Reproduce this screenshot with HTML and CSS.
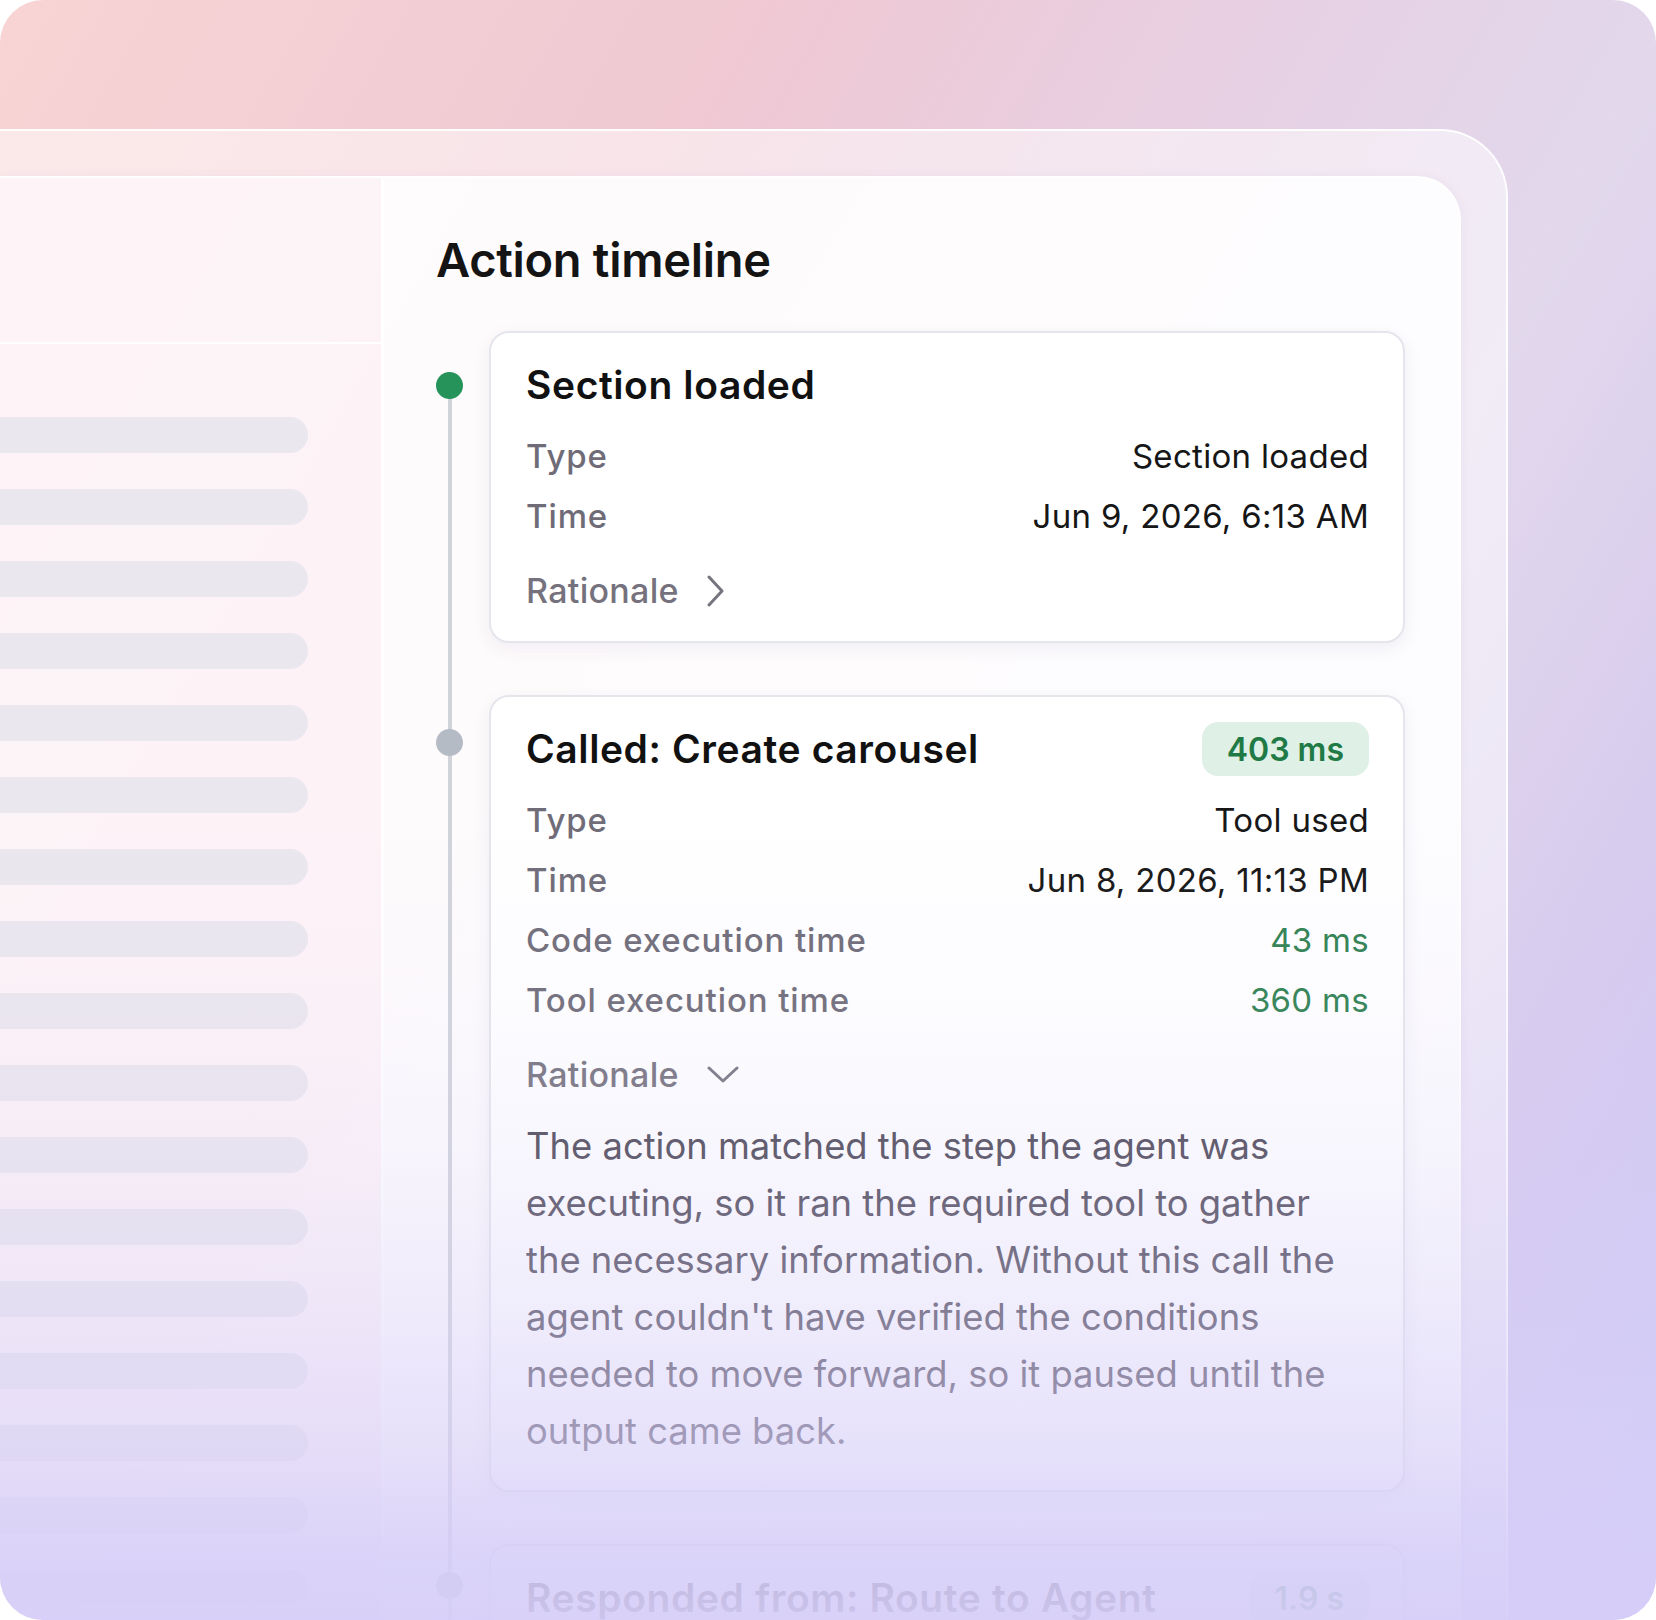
FILE: index.html
```html
<!DOCTYPE html>
<html lang="en">
<head>
    <meta charset="UTF-8">
    <meta name="viewport" content="width=device-width, initial-scale=1.0">
    <title>Action timeline</title>
    <link rel="stylesheet" href="styles.css">
</head>
<body>

    <div class="page">
        <div class="frame">
            <div class="panel">

                <!-- Left list (placeholder rows) -->
                <aside class="sidebar">
                    <div class="sidebar-head"></div>
                    <div class="skeleton">
                        <div class="bar"></div>
                        <div class="bar"></div>
                        <div class="bar"></div>
                        <div class="bar"></div>
                        <div class="bar"></div>
                        <div class="bar"></div>
                        <div class="bar"></div>
                        <div class="bar"></div>
                        <div class="bar"></div>
                        <div class="bar"></div>
                        <div class="bar"></div>
                        <div class="bar"></div>
                        <div class="bar"></div>
                        <div class="bar"></div>
                        <div class="bar"></div>
                        <div class="bar"></div>
                        <div class="bar"></div>
                    </div>
                </aside>

                <!-- Timeline -->
                <main class="content">
                    <h1>Action timeline</h1>

                    <div class="timeline">
                        <div class="item first">
                            <div class="rail"><span class="dot done"></span></div>
                            <div class="card">
                                <div class="card-head">
                                    <h2>Section loaded</h2>
                                </div>
                                <dl class="rows">
                                    <div class="row"><dt>Type</dt><dd>Section loaded</dd></div>
                                    <div class="row"><dt>Time</dt><dd>Jun 9, 2026, 6:13 AM</dd></div>
                                </dl>
                                <div class="rationale">
                                    Rationale
                                    <svg class="chev-right" width="18" height="32" viewBox="0 0 18 32"><polyline points="2,2 15,16 2,30" /></svg>
                                </div>
                            </div>
                        </div>

                        <div class="item">
                            <div class="rail"><span class="dot tool"></span></div>
                            <div class="card">
                                <div class="card-head">
                                    <h2>Called: Create carousel</h2>
                                    <span class="badge">403 ms</span>
                                </div>
                                <dl class="rows">
                                    <div class="row"><dt>Type</dt><dd>Tool used</dd></div>
                                    <div class="row"><dt>Time</dt><dd>Jun 8, 2026, 11:13 PM</dd></div>
                                    <div class="row"><dt>Code execution time</dt><dd class="ok">43 ms</dd></div>
                                    <div class="row"><dt>Tool execution time</dt><dd class="ok">360 ms</dd></div>
                                </dl>
                                <div class="rationale">
                                    Rationale
                                    <svg class="chev-down" width="32" height="18" viewBox="0 0 32 18"><polyline points="2,2 16,15 30,2" /></svg>
                                </div>
                                <p class="reason">The action matched the step the agent was<br>executing, so it ran the required tool to gather<br>the necessary information. Without this call the<br>agent couldn't have verified the conditions<br>needed to move forward, so it paused until the<br>output came back.</p>
                            </div>
                        </div>

                        <div class="item">
                            <div class="rail"><span class="dot reply"></span></div>
                            <div class="card">
                                <div class="card-head">
                                    <h2>Responded from: Route to Agent</h2>
                                    <span class="badge">1.9 s</span>
                                </div>
                                <dl class="rows">
                                    <div class="row"><dt>Type</dt><dd>Response</dd></div>
                                </dl>
                            </div>
                        </div>
                    </div>
                </main>
            </div>
        </div>

        <!-- bottom fade -->
        <div class="fade"></div>
    </div>

</body>
</html>
```

FILE: styles.css
```css
* {
    box-sizing: border-box;
}

html, body {
    margin: 0;
    background: #fff;
}

body {
    font-family: Inter, "Noto Sans", sans-serif;
}

/* Outer card with the pink / lilac wash */
.page {
    position: relative;
    width: 1656px;
    height: 1620px;
    border-radius: 43px;
    overflow: hidden;
    padding-top: 129px;
    display: flex;
    flex-direction: column;
    background: linear-gradient(120deg, #f8d4d4 0%, #efc8d3 30%, #e6d1e5 52%, #e2d8ec 66%, #d6caee 84%, #ccc9f8 100%);
}

/* Glass frame */
.frame {
    flex: 1;
    width: 1508px;
    display: flex;
    flex-direction: column;
    padding: 45px 45px 0 0;
    border-top: 2px solid rgba(255, 255, 255, 0.95);
    border-right: 2px solid rgba(255, 255, 255, 0.85);
    border-top-right-radius: 68px;
    background: rgba(255, 255, 255, 0.5);
}

.panel {
    flex: 1;
    display: grid;
    grid-template-columns: 384px 1fr;
    border-top: 2px solid #fff;
    border-right: 2px solid rgba(255, 255, 255, 0.9);
    border-top-right-radius: 44px;
    background: rgba(255, 255, 255, 0.85);
    box-shadow: 0 0 10px rgba(190, 170, 210, 0.15);
    overflow: hidden;
}

/* Sidebar */
.sidebar {
    border-right: 3px solid #fff;
    background: rgba(252, 228, 238, 0.35);
}

.sidebar-head {
    height: 166px;
    border-bottom: 2px solid #fff;
}

.skeleton {
    display: flex;
    flex-direction: column;
    gap: 36px;
    padding-top: 73px;
}

.bar {
    width: 308px;
    height: 36px;
    border-radius: 0 18px 18px 0;
    background: #ebe7ee;
}

/* Main column */
.content {
    padding: 53px 54px 0 52px;
}

h1 {
    margin: 0;
    font-size: 47px;
    line-height: 57px;
    font-weight: 600;
    color: #141414;
    letter-spacing: -0.3px;
}

.timeline {
    margin-top: 43px;
}

.item {
    display: grid;
    grid-template-columns: 27px 1fr;
    column-gap: 26px;
}

.rail {
    background: linear-gradient(#d0d3da, #d0d3da) center top / 4px 100% no-repeat;
}

.item.first .rail {
    background-position: center 50px;
}

.dot {
    display: block;
    width: 27px;
    height: 27px;
    border-radius: 50%;
    background: #b5bbc4;
}

.dot.done {
    margin-top: 41px;
    background: #25935a;
}

.dot.tool {
    margin-top: 34px;
}

.dot.reply {
    margin-top: 28px;
}

.card {
    margin-bottom: 52px;
    background: #fff;
    border: 2px solid #e5e6ec;
    border-radius: 20px;
    padding: 25px 34px 30px 35px;
    box-shadow: 0 6px 18px rgba(70, 50, 110, 0.07);
}

.card-head {
    display: flex;
    align-items: center;
    justify-content: space-between;
    min-height: 54px;
}

h2 {
    margin: 0;
    font-size: 39px;
    line-height: 46px;
    font-weight: 600;
    color: #111;
    letter-spacing: 0.6px;
}

.badge {
    display: flex;
    align-items: center;
    height: 54px;
    padding: 0 25px;
    border-radius: 16px;
    background: #dff0e7;
    color: #1f7a45;
    font-size: 32px;
    font-weight: 600;
}

.rows {
    margin: 24px 0 0;
    display: flex;
    flex-direction: column;
    gap: 20px;
}

.row {
    display: flex;
    justify-content: space-between;
    font-size: 33px;
    line-height: 40px;
}

dt {
    color: #6f6c78;
    font-weight: 500;
    letter-spacing: 0.9px;
}

dd {
    margin: 0;
    color: #161616;
    letter-spacing: 0.3px;
}

dd.ok {
    color: #2e8150;
}

.rationale {
    margin-top: 35px;
    display: flex;
    align-items: center;
    gap: 28px;
    font-size: 34px;
    line-height: 40px;
    font-weight: 500;
    color: #75727d;
    letter-spacing: 0.3px;
}

.rationale svg polyline {
    fill: none;
    stroke: #77747f;
    stroke-width: 3;
    stroke-linecap: round;
    stroke-linejoin: round;
}

.reason {
    margin: 23px 0 0;
    font-size: 36.4px;
    line-height: 57px;
    color: #4a4553;
    white-space: nowrap;
}

/* Lavender fade over the lower part */
.fade {
    position: absolute;
    left: 0;
    right: 0;
    top: 800px;
    bottom: 0;
    pointer-events: none;
    background: linear-gradient(to bottom,
        rgba(216, 208, 248, 0) 0%,
        rgba(216, 208, 248, 0.07) 24%,
        rgba(216, 208, 248, 0.18) 43%,
        rgba(216, 208, 248, 0.38) 61%,
        rgba(216, 208, 248, 0.64) 79%,
        rgba(214, 206, 248, 0.87) 92%,
        rgba(214, 206, 248, 0.95) 100%);
}
```
